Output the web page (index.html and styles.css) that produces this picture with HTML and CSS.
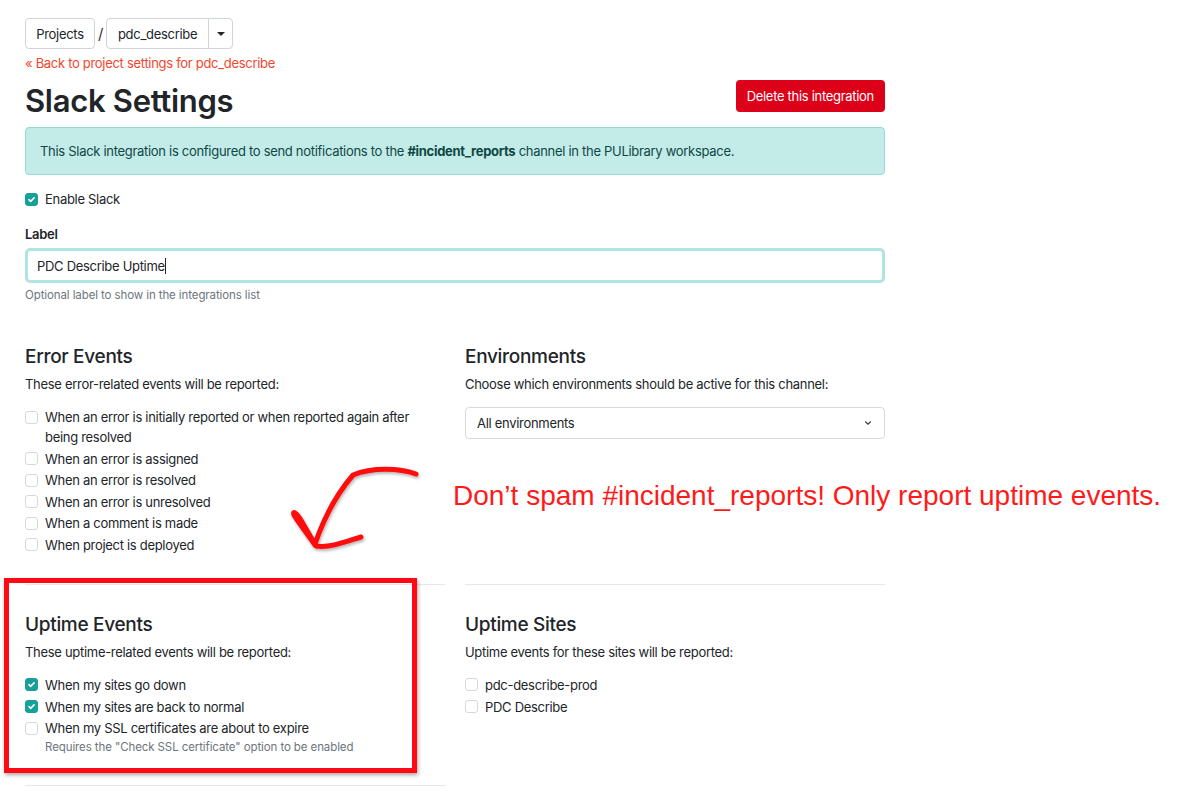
FILE: index.html
```html
<!DOCTYPE html>
<html lang="en">
<head>
<meta charset="utf-8">
<title>Slack Settings</title>
<link rel="stylesheet" href="styles.css">
</head>
<body>
<div class="page">
  <nav class="crumbs">
    <span class="btn">Projects</span>
    <span class="sep">/</span>
    <span class="btn-group">
      <span class="btn grp-main">pdc_describe</span>
      <span class="btn grp-caret"><span class="caret"></span></span>
    </span>
  </nav>
  <a class="back" href="#">« Back to project settings for pdc_describe</a>
  <header class="title-row">
    <h1 class="title">Slack Settings</h1>
    <span class="btn-danger">Delete this integration</span>
  </header>
  <div class="alert">This Slack integration is configured to send notifications to the <b>#incident_reports</b> channel in the PULibrary workspace.</div>

  <label class="check enable"><span class="box on"><svg viewBox="0 0 12 12"><path d="M3.2 6.2 L5.1 8 L8.8 4.2" /></svg></span>Enable Slack</label>

  <div class="field">
    <div class="field-label">Label</div>
    <div class="input">PDC Describe Uptime<span class="cursor"></span></div>
    <div class="help">Optional label to show in the integrations list</div>
  </div>

  <div class="grid">
    <section class="cell">
      <h3 class="h3">Error Events</h3>
      <p class="sub">These error-related events will be reported:</p>
      <ul class="checks">
        <li class="check"><span class="box"></span><span>When an error is initially reported or when reported again after being resolved</span></li>
        <li class="check"><span class="box"></span><span>When an error is assigned</span></li>
        <li class="check"><span class="box"></span><span>When an error is resolved</span></li>
        <li class="check"><span class="box"></span><span>When an error is unresolved</span></li>
        <li class="check"><span class="box"></span><span>When a comment is made</span></li>
        <li class="check"><span class="box"></span><span>When project is deployed</span></li>
      </ul>
    </section>
    <section class="cell">
      <h3 class="h3">Environments</h3>
      <p class="sub">Choose which environments should be active for this channel:</p>
      <div class="select">All environments<svg class="chev" viewBox="0 0 10 10"><path d="M2.5 3.8 L5 6.2 L7.5 3.8"/></svg></div>
    </section>
    <section class="cell ruled">
      <h3 class="h3">Uptime Events</h3>
      <p class="sub">These uptime-related events will be reported:</p>
      <ul class="checks">
        <li class="check"><span class="box on"><svg viewBox="0 0 12 12"><path d="M3.2 6.2 L5.1 8 L8.8 4.2" /></svg></span><span>When my sites go down</span></li>
        <li class="check"><span class="box on"><svg viewBox="0 0 12 12"><path d="M3.2 6.2 L5.1 8 L8.8 4.2" /></svg></span><span>When my sites are back to normal</span></li>
        <li class="check"><span class="box"></span><span>When my SSL certificates are about to expire</span></li>
      </ul>
      <div class="check-help">Requires the "Check SSL certificate" option to be enabled</div>
    </section>
    <section class="cell ruled">
      <h3 class="h3">Uptime Sites</h3>
      <p class="sub">Uptime events for these sites will be reported:</p>
      <ul class="checks">
        <li class="check"><span class="box"></span><span>pdc-describe-prod</span></li>
        <li class="check"><span class="box"></span><span>PDC Describe</span></li>
      </ul>
    </section>
    <div class="cell ruled tail"></div>
  </div>
</div>

<div class="annot-box"></div>
<svg class="annot-arrow" width="1202" height="793" viewBox="0 0 1202 793">
  <defs>
    <filter id="sh" x="-20%" y="-20%" width="140%" height="140%">
      <feDropShadow dx="1" dy="2" stdDeviation="1.5" flood-color="#000" flood-opacity="0.3"/>
    </filter>
  </defs>
  <path filter="url(#sh)" d="M416 474 C 400 468, 372 467, 353 475 C 340 490, 326 512, 315 544 M 315 545 C 306 532, 298 522, 294 515 C 292 510, 297 513, 302 522 L 316 546 C 330 548, 345 542, 361 537"/>
</svg>
<div class="annot-text">Don’t spam #incident_reports! Only report uptime events.</div>
</body>
</html>
```

FILE: styles.css
```css
* { box-sizing: border-box; }
html, body { margin: 0; padding: 0; background: #fff; }
body {
  font-family: Inter, "Noto Sans", "Liberation Sans", sans-serif;
  font-size: 13px;
  letter-spacing: -0.3px;
  color: #212529;
  width: 1202px;
  height: 793px;
  overflow: hidden;
  position: relative;
}
.page { width: 860px; margin-left: 25px; padding-top: 18px; }

.crumbs { display: flex; align-items: center; height: 31px; }
.btn {
  display: inline-flex; align-items: center; justify-content: center;
  height: 31px; padding: 0 10px;
  border: 1px solid #ced4da; border-radius: 4px;
  background: #fff; color: #212529; font-size: 13px;
}
.crumbs > .btn:first-child { width: 70px; }
.sep { margin: 0 3px; color: #333; font-size: 15px; }
.btn-group { display: inline-flex; }
.grp-main { border-radius: 4px 0 0 4px; width: 103px; }
.grp-caret { border-radius: 0 4px 4px 0; width: 25px; padding: 0; margin-left: -1px; }
.caret { width: 0; height: 0; border-left: 4px solid transparent; border-right: 4px solid transparent; border-top: 4px solid #212529; }

.back { display: block; margin-top: 6px; color: #f1462d; text-decoration: none; font-size: 13px; line-height: 16px; }

.title-row { display: flex; justify-content: space-between; align-items: flex-start; margin-top: 8px; }
.title { margin: 0; font-size: 31px; font-weight: 600; line-height: 44px; letter-spacing: -0.3px; }
.btn-danger {
  display: inline-flex; align-items: center; height: 32px; padding: 0 11px;
  margin-top: 1px;
  background: #dc0018; color: #fff; border-radius: 4px; font-size: 13px;
}

.alert {
  margin-top: 4px; height: 48px; line-height: 46px;
  padding: 0 14px; background: #c3ebe8; border: 1px solid #93dad4; border-radius: 4px;
  color: #0e4844; font-size: 13px;
}
.alert b { font-weight: 700; }

.check { display: flex; align-items: flex-start; gap: 7px; line-height: 20px; font-size: 13px; }
.box {
  flex: none; width: 13px; height: 13px; margin-top: 3.5px;
  border: 1px solid #d5d9dd; border-radius: 3px; background: #fff;
  display: flex; align-items: center; justify-content: center;
}
.box.on { background: #17a097; border-color: #17a097; }
.box svg { width: 11px; height: 11px; fill: none; stroke: #fff; stroke-width: 1.7; stroke-linecap: round; stroke-linejoin: round; }
.enable { margin-top: 14px; }

.field { margin-top: 16px; }
.field-label { font-weight: 600; line-height: 18px; }
.input {
  margin-top: 5px; height: 35px; display: flex; align-items: center;
  padding: 0 9px; border: 3px solid #b0e4e0; border-radius: 5px; font-size: 13px;
}
.cursor { display: inline-block; width: 1px; height: 16px; background: #222; }
.help { margin-top: 4px; font-size: 11.5px; color: #6c757d; line-height: 16px; letter-spacing: -0.1px; }

.grid { display: grid; grid-template-columns: 420px 420px; column-gap: 20px; margin-top: 41px; }
.h3 { margin: 0; font-size: 19px; font-weight: 500; line-height: 26px; letter-spacing: -0.3px; }
.sub { margin: 5px 0 0; line-height: 18px; }
.checks { list-style: none; margin: 14px 0 0; padding: 0; display: flex; flex-direction: column; gap: 1.6px; }
.ruled { border-top: 1px solid #e9e6e3; margin-top: 29px; padding-top: 27px; }
.check-help { margin-left: 20px; font-size: 11.5px; color: #6c757d; line-height: 14px; margin-top: 2px; letter-spacing: -0.1px; }
.tail { padding-top: 0; margin-top: 31px; }

.select {
  margin-top: 14px; height: 32px; display: flex; align-items: center; justify-content: space-between;
  padding: 0 11px; border: 1px solid #d6dade; border-radius: 4px;
}
.chev { width: 10px; height: 10px; fill: none; stroke: #444; stroke-width: 1.2; stroke-linecap: round; stroke-linejoin: round; }

.annot-box {
  position: absolute; left: 4px; top: 578px; width: 413px; height: 195px;
  border: 5px solid #ff0a14; box-shadow: 1px 2px 4px rgba(0,0,0,0.35);
}
.annot-arrow { position: absolute; left: 0; top: 0; pointer-events: none; }
.annot-arrow path { fill: none; stroke: #ff0a0a; stroke-width: 5; stroke-linecap: round; stroke-linejoin: round; }
.annot-text {
  position: absolute; left: 453px; top: 479px; letter-spacing: 0;
  font-family: "Liberation Sans", Arial, sans-serif; font-size: 28px; color: #ff1a1a; line-height: 34px;
  white-space: nowrap;
}
```
